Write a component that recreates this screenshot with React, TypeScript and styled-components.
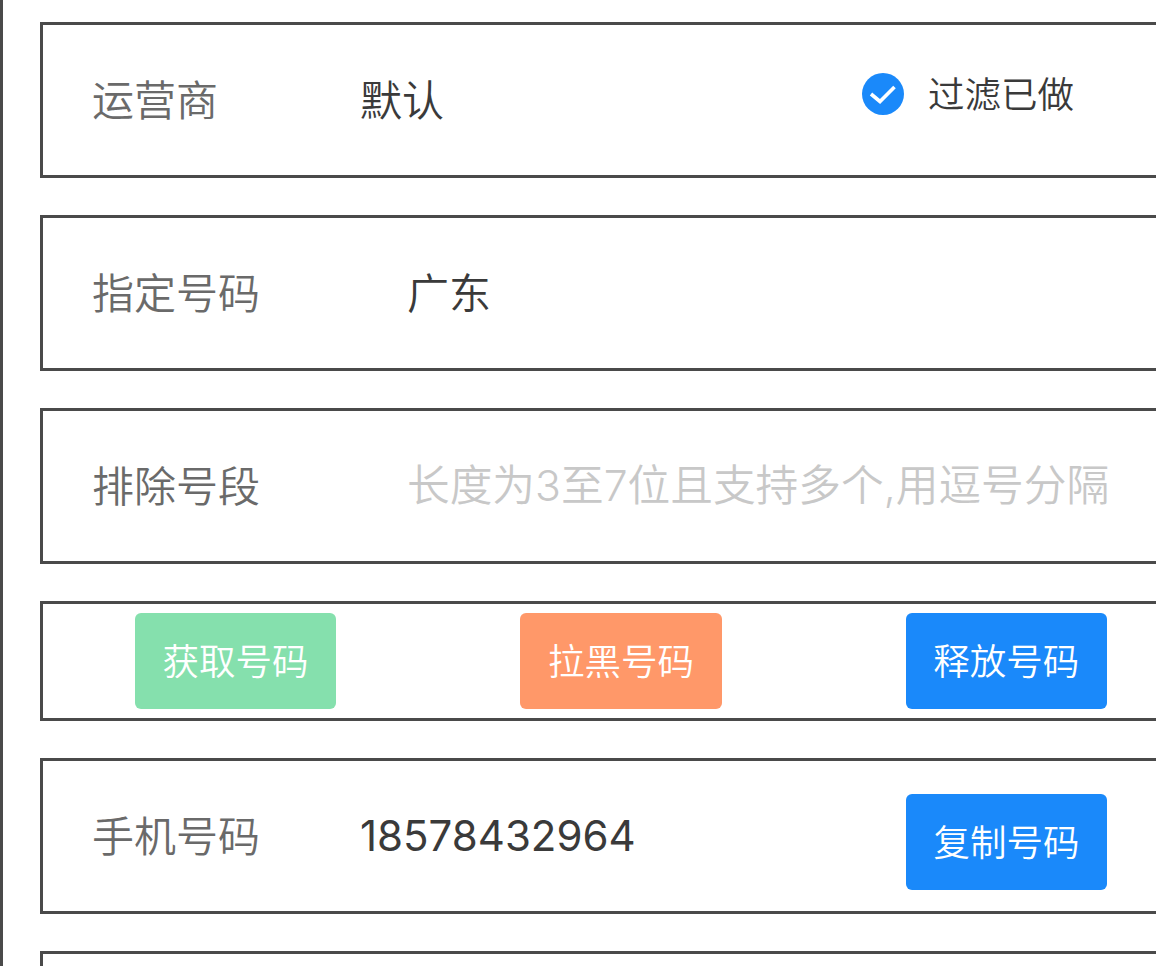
import React, { FC } from 'react';
import styled, { createGlobalStyle } from 'styled-components';

const borderColor = '#4a4a4a';
const blue = '#1a89fa';

const GlobalStyle = createGlobalStyle`
  html, body {
    margin: 0;
    padding: 0;
    width: 1156px;
    height: 966px;
    overflow: hidden;
    background: #fff;
  }
  body {
    font-family: "Noto Sans CJK SC", "Noto Sans", sans-serif;
    font-weight: 350;
  }
`;

const Page = styled.div`
  box-sizing: border-box;
  width: 1200px;
  height: 966px;
  overflow: hidden;
  border-left: 3px solid ${borderColor};
  padding: 22px 0 0 37px;
  display: flex;
  flex-direction: column;
  gap: 37px;
`;

const Row = styled.section<{ $height?: number }>`
  box-sizing: border-box;
  flex: none;
  height: ${({ $height }) => $height || 156}px;
  border: 3px solid ${borderColor};
  display: flex;
  align-items: center;
  padding-left: 49px;
`;

const Label = styled.span`
  flex: none;
  width: 268px;
  padding-bottom: 4px;
  font-size: 42px;
  line-height: 60px;
  color: #6a6a6a;
`;

const Value = styled.span<{ $width?: number; $indent?: number }>`
  flex: none;
  box-sizing: border-box;
  width: ${({ $width }) => $width || 700}px;
  padding-left: ${({ $indent }) => $indent || 0}px;
  padding-bottom: 4px;
  font-size: 42px;
  line-height: 60px;
  color: #3a3a3a;
  white-space: nowrap;
`;

const Placeholder = styled(Value)`
  font-size: 42.7px;
  color: #c8c8c8;
`;

const Latin = styled.span`
  font-family: "Inter", sans-serif;
  font-weight: 300;
`;

const Digits = styled(Value)`
  padding-bottom: 0;
  font-family: "Inter", sans-serif;
  font-weight: 400;
`;

const Filter = styled.label`
  display: flex;
  align-items: center;
  gap: 24px;
  margin-bottom: 12px;
  font-size: 36.5px;
  line-height: 50px;
  color: #3a3a3a;
`;

const FilterText = styled.span`
  padding-bottom: 2px;
`;

const CheckIcon = styled.svg`
  display: block;
  width: 42px;
  height: 42px;
`;

const ButtonRow = styled(Row)`
  padding-left: 92px;
  gap: 184.2px;
`;

const Button = styled.button<{ $color: string; $offset?: number }>`
  flex: none;
  width: 201.2px;
  height: 96px;
  margin: ${({ $offset }) => $offset || 0}px 0 0;
  padding: 0 0 4px;
  border: 0;
  border-radius: 6px;
  background: ${({ $color }) => $color};
  color: #fff;
  font-family: inherit;
  font-weight: 350;
  font-size: 36.5px;
`;

const Check: FC = () => (
  <CheckIcon viewBox="0 0 42 42">
    <circle cx="21" cy="21" r="21" fill={blue} />
    <path d="M9 21l9 7.5L32.5 14" fill="none" stroke="#fff" strokeWidth="3.6" />
  </CheckIcon>
);

const App: FC = () => (
  <>
    <GlobalStyle />
    <Page>
      <Row>
        <Label>运营商</Label>
        <Value $width={502}>默认</Value>
        <Filter>
          <Check />
          <FilterText>过滤已做</FilterText>
        </Filter>
      </Row>
      <Row>
        <Label>指定号码</Label>
        <Value $indent={47}>广东</Value>
      </Row>
      <Row>
        <Label>排除号段</Label>
        <Placeholder $width={800} $indent={47}>
          长度为<Latin>3</Latin>至<Latin>7</Latin>位且支持多个<Latin>,</Latin>用逗号分隔
        </Placeholder>
      </Row>
      <ButtonRow $height={120}>
        <Button $color="#85e0ad">获取号码</Button>
        <Button $color="#ff9869">拉黑号码</Button>
        <Button $color={blue}>释放号码</Button>
      </ButtonRow>
      <Row>
        <Label>手机号码</Label>
        <Digits $width={546}>18578432964</Digits>
        <Button $color={blue} $offset={12}>复制号码</Button>
      </Row>
      <Row />
    </Page>
  </>
);

export default App;
